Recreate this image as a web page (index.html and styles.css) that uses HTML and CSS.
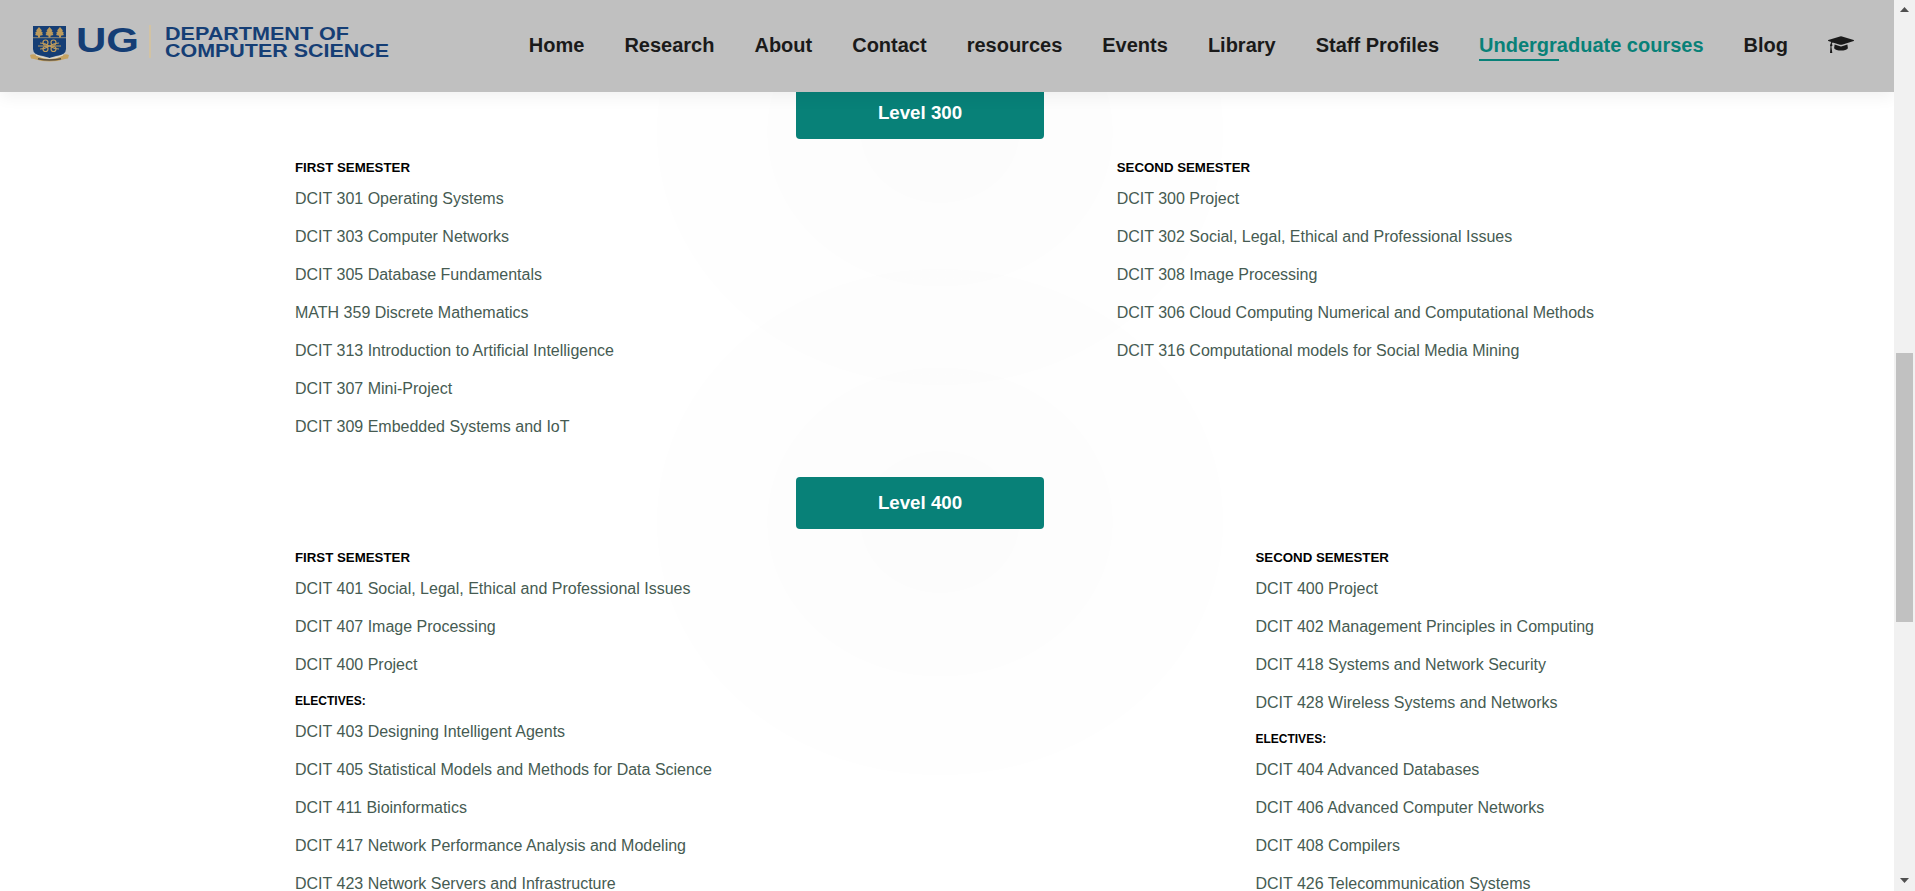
FILE: index.html
```html
<!DOCTYPE html>
<html lang="en">
<head>
<meta charset="utf-8">
<title>Undergraduate courses</title>
<link rel="stylesheet" href="styles.css">
</head>
<body>
<div class="page">
  <header class="header">
    <a class="brand" href="#">
      <svg class="crest" width="40" height="38" viewBox="0 0 40 38">
        <path d="M3 1h33v23q0 6-10 7l-6.500 2l-6.500-2q-10-1-10-7z" fill="#153e75"/>
        <path d="M3 12.700h33" stroke="#8c8878" stroke-width="1"/>
        <g fill="#bd9b5c">
          <path id="tree" d="M9 2l3 3.500-1 .5 2 2-1 .5 1 1.500-3 .7v1.800H8v-1.800L5 10l1-1.500L5 8l2-2-1-.500z"/>
          <use href="#tree" x="10.500"/><use href="#tree" x="21"/>
        </g>
        <g fill="none" stroke="#bd9b5c" stroke-width="1.200">
          <circle cx="15.500" cy="17.500" r="2.500"/><circle cx="23.500" cy="17.500" r="2.500"/>
          <circle cx="15.500" cy="24" r="2.500"/><circle cx="23.500" cy="24" r="2.500"/>
          <path d="M8 21h23M10 18q5 0 9.500 3q4.500 3 9.500 3M10 24q5 0 9.500-3q4.500-3 9.500-3"/>
        </g>
        <path d="M0 30q3-1.500 6 0q13.500 7 27 0q3-1.500 6 0l-1 3.500-3 .5q-15.500 5-31 0l-3-.5z" fill="#c6a362"/>
        <path d="M6 30q13.500 7 27 0" fill="none" stroke="#dedbd2" stroke-width="1.200"/>
        <path d="M8 33.700q11.500 2.800 23 0" fill="none" stroke="#584f43" stroke-width="1.500"/>
      </svg>
      <svg class="wordmark" width="325" height="40" viewBox="0 0 325 40">
        <g fill="#153e75" font-family="Liberation Sans, Arial, sans-serif" font-weight="700">
          <text x="1" y="26.500" font-size="35" textLength="63" lengthAdjust="spacingAndGlyphs">UG</text>
          <text x="90" y="14.500" font-size="18" textLength="184" lengthAdjust="spacingAndGlyphs">DEPARTMENT OF</text>
          <text x="90" y="32.300" font-size="18" textLength="224" lengthAdjust="spacingAndGlyphs">COMPUTER SCIENCE</text>
        </g>
        <path d="M75 0v33" stroke="#d2c3a4" stroke-width="2"/>
      </svg>
    </a>
    <nav class="nav">
      <a href="#">Home</a><a href="#">Research</a><a href="#">About</a><a href="#">Contact</a><a href="#">resources</a><a href="#">Events</a><a href="#">Library</a><a href="#">Staff Profiles</a><a class="active" href="#">Undergraduate courses</a><a href="#">Blog</a>
      <a class="portal" href="#" aria-label="Student portal"><svg class="cap" width="26" height="18" viewBox="0 0 26 18"><g fill="currentColor"><path d="M.3 4.100 12 .4q1-.3 2 0l11.700 3.700q.6.400 0 .8L14 8.700q-1 .3-2 0L4.600 6.400q-.7.500-.8 1.700.9.600.5 1.700l-.9.700.9 6.500H2l.5-6.500q-1.100-1.200.1-2.400.1-1.500.7-2.200L.3 4.900q-.6-.4 0-.8z"/><path d="M6.600 8.600 12 10.300q1 .3 2 0l5.400-1.700.5 3.600c-1.500 3.200-12.300 3.200-13.800 0z"/></g></svg></a>
    </nav>
  </header>
  <main class="courses">
    <section class="level">
      <h2 class="level-title">Level 300</h2>
      <div class="columns">
        <div>
          <h5>FIRST SEMESTER</h5>
          <p>DCIT 301 Operating Systems</p>
          <p>DCIT 303 Computer Networks</p>
          <p>DCIT 305 Database Fundamentals</p>
          <p>MATH 359 Discrete Mathematics</p>
          <p>DCIT 313 Introduction to Artificial Intelligence</p>
          <p>DCIT 307 Mini-Project</p>
          <p>DCIT 309 Embedded Systems and IoT</p>
        </div>
        <div>
          <h5>SECOND SEMESTER</h5>
          <p>DCIT 300 Project</p>
          <p>DCIT 302 Social, Legal, Ethical and Professional Issues</p>
          <p>DCIT 308 Image Processing</p>
          <p>DCIT 306 Cloud Computing Numerical and Computational Methods</p>
          <p>DCIT 316 Computational models for Social Media Mining</p>
        </div>
      </div>
    </section>
    <section class="level">
      <h2 class="level-title">Level 400</h2>
      <div class="columns">
        <div>
          <h5>FIRST SEMESTER</h5>
          <p>DCIT 401 Social, Legal, Ethical and Professional Issues</p>
          <p>DCIT 407 Image Processing</p>
          <p>DCIT 400 Project</p>
          <h6>ELECTIVES:</h6>
          <p>DCIT 403 Designing Intelligent Agents</p>
          <p>DCIT 405 Statistical Models and Methods for Data Science</p>
          <p>DCIT 411 Bioinformatics</p>
          <p>DCIT 417 Network Performance Analysis and Modeling</p>
          <p>DCIT 423 Network Servers and Infrastructure</p>
        </div>
        <div>
          <h5>SECOND SEMESTER</h5>
          <p>DCIT 400 Project</p>
          <p>DCIT 402 Management Principles in Computing</p>
          <p>DCIT 418 Systems and Network Security</p>
          <p>DCIT 428 Wireless Systems and Networks</p>
          <h6>ELECTIVES:</h6>
          <p>DCIT 404 Advanced Databases</p>
          <p>DCIT 406 Advanced Computer Networks</p>
          <p>DCIT 408 Compilers</p>
          <p>DCIT 426 Telecommunication Systems</p>
        </div>
      </div>
    </section>
  </main>
</div>
<div class="scrollbar">
  <svg width="9" height="5" viewBox="0 0 9 5"><path d="M0 5 4.500 0 9 5z" fill="#505050"/></svg>
  <div class="thumb"></div>
  <svg width="9" height="5" viewBox="0 0 9 5"><path d="M0 0 4.500 5 9 0z" fill="#505050"/></svg>
</div>
</body>
</html>
```
FILE: styles.css
```css
* { box-sizing: border-box; margin: 0; padding: 0; }
body {
  display: flex;
  height: 891px;
  overflow: hidden;
  background: #fff;
  font-family: "Liberation Sans", Arial, sans-serif;
}
.page { width: 1894px; height: 891px; overflow: hidden; }
.header {
  position: relative;
  z-index: 1;
  display: flex;
  align-items: center;
  justify-content: space-between;
  height: 92px;
  padding: 0 40px 0 30px;
  background: #c0c0c0;
  box-shadow: 0 5px 15px rgba(0, 0, 0, 0.06);
}
.brand { display: flex; align-items: flex-start; gap: 5px; height: 42px; }
.wordmark { overflow: visible; }
.nav { display: flex; align-items: center; gap: 40px; padding-bottom: 2px; }
.nav a {
  position: relative;
  color: #1a1a1a;
  font-size: 20px;
  font-weight: 700;
  line-height: 24px;
  text-decoration: none;
  white-space: nowrap;
}
.nav .active { color: #088178; }
.nav .active::after {
  content: "";
  position: absolute;
  left: 0;
  bottom: -4px;
  width: 80px;
  height: 2px;
  background: #088178;
}
.cap { display: block; }
.courses {
  height: 799px;
  padding: 0 300px 0 295px;
  background:
    radial-gradient(ellipse 283px 253px at 943px 41px, rgba(0, 0, 0, 0.0118) 28%, rgba(0, 0, 0, 0.0079) 28% 61%, rgba(0, 0, 0, 0.004) 61% 100%, transparent 100%),
    radial-gradient(ellipse 283px 253px at 943px 431px, rgba(0, 0, 0, 0.0118) 28%, rgba(0, 0, 0, 0.0079) 28% 61%, rgba(0, 0, 0, 0.004) 61% 100%, transparent 100%);
  background-position: -3px 4px;
  background-repeat: no-repeat;
}
.level { height: 390px; }
.level:first-child { margin-top: -5px; }
.level-title {
  width: 248px;
  height: 52px;
  margin-left: 501px;
  border-radius: 4px;
  background: #088178;
  color: #fff;
  font-size: 18.72px;
  line-height: 51px;
  text-align: center;
}
.columns { display: flex; justify-content: space-between; padding-top: 21px; }
.columns h5 { height: 30px; color: #000; font-size: 13.28px; line-height: 15px; }
.columns h6 { height: 29px; color: #000; font-size: 12px; line-height: 14px; }
.columns p { height: 38px; color: #465b52; font-size: 16px; line-height: 18px; white-space: nowrap; }
.scrollbar {
  display: flex;
  flex-direction: column;
  align-items: center;
  width: 21px;
  height: 891px;
  padding: 7px 0 8px;
  background: #f1f1f1;
}
.thumb { width: 17px; height: 269px; margin: 341px 0 auto; background: #c1c1c1; }
```
